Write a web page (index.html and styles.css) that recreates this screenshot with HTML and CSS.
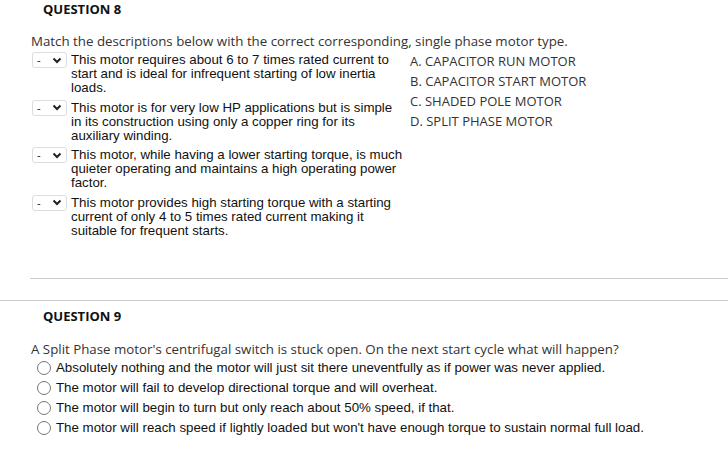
FILE: index.html
```html
<!DOCTYPE html>
<html lang="en">
<head>
    <meta charset="UTF-8">
    <title>Question 8 and 9</title>
    <link rel="stylesheet" href="styles.css">
</head>
<body>
    <div class="question q8">
        <h2 class="q-title">QUESTION 8</h2>
        <p class="q-text">Match the descriptions below with the correct corresponding, single phase motor type.</p>
        <div class="match">
            <div class="match-items">
                <div class="match-row">
                    <div class="select"><span>-</span><svg width="10" height="7" viewBox="0 0 10 7"><path d="M1.5 1.5 L5 5 L8.5 1.5" fill="none" stroke="#222" stroke-width="2"/></svg></div>
                    <div class="desc">This motor requires about 6 to 7 times rated current to start and is ideal for infrequent starting of low inertia loads.</div>
                </div>
                <div class="match-row">
                    <div class="select"><span>-</span><svg width="10" height="7" viewBox="0 0 10 7"><path d="M1.5 1.5 L5 5 L8.5 1.5" fill="none" stroke="#222" stroke-width="2"/></svg></div>
                    <div class="desc">This motor is for very low HP applications but is simple in its construction using only a copper ring for its auxiliary winding.</div>
                </div>
                <div class="match-row">
                    <div class="select"><span>-</span><svg width="10" height="7" viewBox="0 0 10 7"><path d="M1.5 1.5 L5 5 L8.5 1.5" fill="none" stroke="#222" stroke-width="2"/></svg></div>
                    <div class="desc">This motor, while having a lower starting torque, is much quieter operating and maintains a high operating power factor.</div>
                </div>
                <div class="match-row">
                    <div class="select"><span>-</span><svg width="10" height="7" viewBox="0 0 10 7"><path d="M1.5 1.5 L5 5 L8.5 1.5" fill="none" stroke="#222" stroke-width="2"/></svg></div>
                    <div class="desc">This motor provides high starting torque with a starting current of only 4 to 5 times rated current making it suitable for frequent starts.</div>
                </div>
            </div>
            <ul class="answers">
                <li>A. CAPACITOR RUN MOTOR</li>
                <li>B. CAPACITOR START MOTOR</li>
                <li>C. SHADED POLE MOTOR</li>
                <li>D. SPLIT PHASE MOTOR</li>
            </ul>
        </div>
    </div>

    <hr class="divider inner">
    <hr class="divider full">

    <div class="question q9">
        <h2 class="q-title">QUESTION 9</h2>
        <p class="q-text">A Split Phase motor's centrifugal switch is stuck open. On the next start cycle what will happen?</p>
        <ul class="options">
            <li><span class="radio"></span>Absolutely nothing and the motor will just sit there uneventfully as if power was never applied.</li>
            <li><span class="radio"></span>The motor will fail to develop directional torque and will overheat.</li>
            <li><span class="radio"></span>The motor will begin to turn but only reach about 50% speed, if that.</li>
            <li><span class="radio"></span>The motor will reach speed if lightly loaded but won't have enough torque to sustain normal full load.</li>
        </ul>
    </div>
</body>
</html>
```

FILE: styles.css
```css
body {
    margin: 0;
    background: #fff;
    font-family: "Open Sans", sans-serif;
    color: #333;
}

.question {
    padding-left: 31px;
}

.q-title {
    margin: 0 0 0 12px;
    font-size: 13px;
    line-height: 18px;
    font-weight: 700;
    color: #111;
}

.q-text {
    font-size: 13.3px;
    line-height: 18px;
    margin: 0;
}

.q8 .q-text {
    margin-top: 14px;
}

.match {
    display: flex;
}

.match-items {
    width: 379px;
    padding-top: 1px;
}

.match-row {
    display: flex;
    align-items: flex-start;
    margin-bottom: 3.5px;
}

.select {
    width: 35px;
    height: 16px;
    margin: 1px 4px 0 1px;
    border: 1px solid #ddd;
    border-radius: 3px;
    display: flex;
    align-items: center;
    justify-content: space-between;
    padding: 0 4px 0 4px;
    box-sizing: border-box;
    font-family: "Liberation Sans", Arial, sans-serif;
    font-size: 11px;
    color: #222;
    flex-shrink: 0;
}

.select svg {
    display: block;
}

.desc {
    width: 334px;
    font-family: "Liberation Sans", Arial, sans-serif;
    font-size: 13.3px;
    line-height: 14px;
    color: #111;
    padding-top: 2px;
}

.answers {
    list-style: none;
    margin: 0;
    padding: 1px 0 0;
    font-size: 13px;
    line-height: 20px;
}

.divider {
    border: 0;
    border-top: 1px solid #ccc;
    margin: 0;
}

.divider.inner {
    margin: 37px 0 0 30px;
}

.divider.full {
    margin-top: 21px;
}

.q9 {
    padding-top: 6px;
}

.q9 .q-text {
    margin-top: 15px;
}

.options {
    list-style: none;
    margin: 0;
    padding: 0 0 0 6px;
    font-family: "Liberation Sans", Arial, sans-serif;
    font-size: 13.3px;
    line-height: 20px;
    color: #111;
}

.options li {
    display: flex;
    align-items: center;
}

.radio {
    width: 12px;
    height: 12px;
    border: 1px solid #777;
    border-radius: 50%;
    margin-right: 5px;
    flex-shrink: 0;
}
```
